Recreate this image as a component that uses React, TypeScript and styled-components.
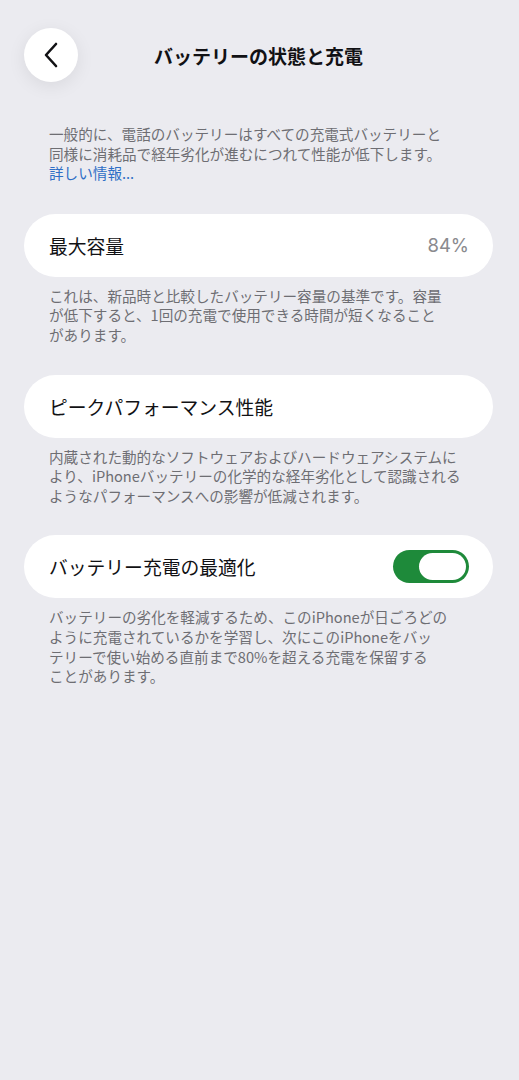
import React, { useState } from 'react';
import styled, { createGlobalStyle } from 'styled-components';

const GlobalStyle = createGlobalStyle`
  body {
    margin: 0;
    padding: 0;
    background-color: #ebebf0;
    font-family: 'Noto Sans CJK JP', 'Noto Sans', sans-serif;
    -webkit-font-smoothing: antialiased;
  }
`;

const Page = styled.div`
  min-height: 100vh;
  padding: 28px 26px 40px 24px;
  box-sizing: border-box;
  background: #ebebf0;
`;

const Header = styled.div`
  position: relative;
  display: flex;
  align-items: center;
  justify-content: center;
  height: 54px;
`;

const BackButton = styled.button`
  position: absolute;
  left: 0;
  top: 0;
  width: 54px;
  height: 54px;
  border-radius: 50%;
  border: none;
  background: #ffffff;
  box-shadow: 0 4px 18px rgba(0, 0, 0, 0.08);
  display: flex;
  align-items: center;
  justify-content: center;
  padding: 0;
  cursor: pointer;
`;

const Title = styled.h1`
  margin: 0;
  font-size: 19px;
  font-weight: 700;
  color: #111114;
  letter-spacing: 0;
`;

const Note = styled.p<{ $top?: number }>`
  margin: ${(p) => p.$top ?? 9}px 0 0;
  padding: 0 25px;
  font-size: 14.6px;
  line-height: 19.6px;
  color: #6e6e73;
  white-space: nowrap;
`;

const Link = styled.a`
  color: #2f6fc6;
  text-decoration: none;
`;

const Card = styled.div<{ $top: number }>`
  margin-top: ${(p) => p.$top}px;
  height: 63px;
  border-radius: 32px;
  background: #ffffff;
  display: flex;
  align-items: center;
  justify-content: space-between;
  padding: 0 24px 0 25px;
`;

const Label = styled.span`
  font-size: 18.8px;
  color: #111114;
`;

const Value = styled.span`
  font-size: 18.5px;
  color: #8a8a8e;
  font-family: 'Inter', 'Noto Sans', sans-serif;
  font-weight: 400;
`;

const Toggle = styled.button<{ $on: boolean }>`
  width: 76px;
  height: 33px;
  border-radius: 17px;
  border: none;
  padding: 3px;
  box-sizing: border-box;
  background: ${(p) => (p.$on ? '#1e8a3a' : '#e3e3e8')};
  display: flex;
  justify-content: ${(p) => (p.$on ? 'flex-end' : 'flex-start')};
  cursor: pointer;
`;

const Knob = styled.span`
  width: 47px;
  height: 27px;
  border-radius: 14px;
  background: #ffffff;
`;

const Chevron = () => (
  <svg width="16" height="26" viewBox="0 0 16 26" fill="none">
    <path d="M13 2 L3 13 L13 24" stroke="#111114" strokeWidth="2.6" strokeLinecap="round" strokeLinejoin="round" />
  </svg>
);

const App: React.FC = () => {
  const [optimized, setOptimized] = useState(true);

  return (
    <>
      <GlobalStyle />
      <Page>
        <Header>
          <BackButton aria-label="戻る">
            <Chevron />
          </BackButton>
          <Title>バッテリーの状態と充電</Title>
        </Header>

        <Note $top={42}>
          一般的に、電話のバッテリーはすべての充電式バッテリーと
          <br />
          同様に消耗品で経年劣化が進むにつれて性能が低下します。
          <br />
          <Link href="#">詳しい情報...</Link>
        </Note>

        <Card $top={31}>
          <Label>最大容量</Label>
          <Value>84%</Value>
        </Card>
        <Note>
          これは、新品時と比較したバッテリー容量の基準です。容量
          <br />
          が低下すると、1回の充電で使用できる時間が短くなること
          <br />
          があります。
        </Note>

        <Card $top={30}>
          <Label>ピークパフォーマンス性能</Label>
        </Card>
        <Note>
          内蔵された動的なソフトウェアおよびハードウェアシステムに
          <br />
          より、iPhoneバッテリーの化学的な経年劣化として認識される
          <br />
          ようなパフォーマンスへの影響が低減されます。
        </Note>

        <Card $top={30}>
          <Label>バッテリー充電の最適化</Label>
          <Toggle $on={optimized} onClick={() => setOptimized(!optimized)} aria-label="バッテリー充電の最適化">
            <Knob />
          </Toggle>
        </Card>
        <Note>
          バッテリーの劣化を軽減するため、このiPhoneが日ごろどの
          <br />
          ように充電されているかを学習し、次にこのiPhoneをバッ
          <br />
          テリーで使い始める直前まで80%を超える充電を保留する
          <br />
          ことがあります。
        </Note>
      </Page>
    </>
  );
};

export default App;
